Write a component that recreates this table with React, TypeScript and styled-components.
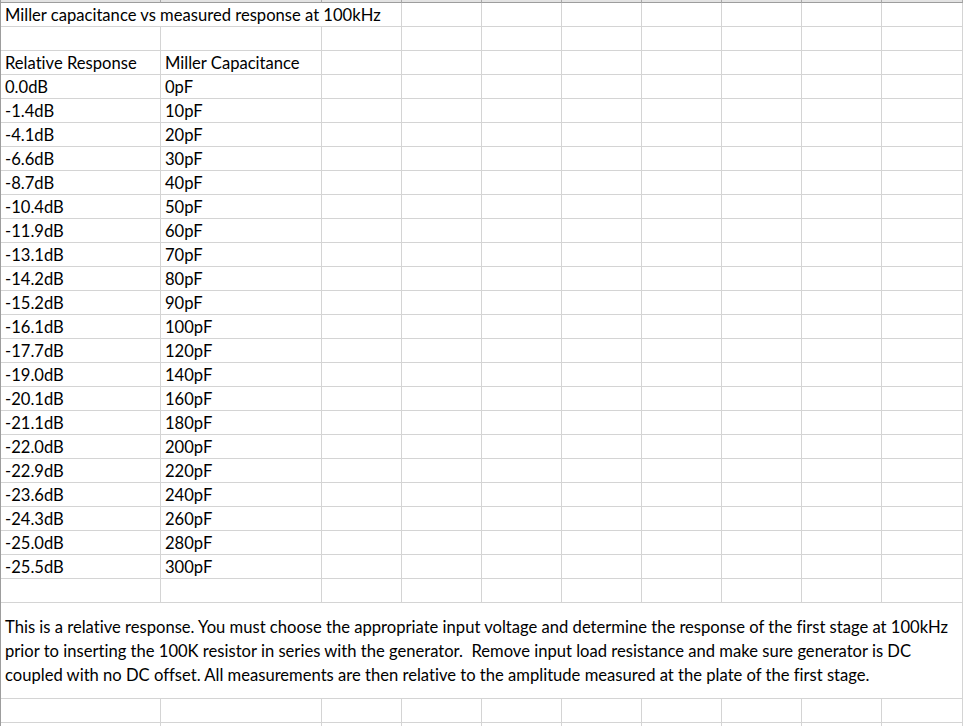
import React from 'react';
import styled, { createGlobalStyle } from 'styled-components';

const GlobalStyle = createGlobalStyle`
  html, body { margin: 0; padding: 0; background: #ffffff; }
  body {
    font-family: Lato, "Liberation Sans", sans-serif;
    color: #000;
    overflow: hidden;
    font-variant-ligatures: none;
  }
`;

const COLUMN_WIDTHS = [160, 161, 80, 80, 80, 80, 80, 80, 80, 81];
const GRID = '#d4d4d4';
const FONT_SIZE = '16.6px';

const Sheet = styled.div`
  display: grid;
  grid-template-columns: ${COLUMN_WIDTHS.map((w) => `${w}px`).join(' ')};
  width: 963px;
  box-sizing: border-box;
  border-left: 1px solid #9d9d9d;
`;

const HeaderCell = styled.div`
  height: 3px;
  box-sizing: border-box;
  background: #e3e3e3;
  border-right: 1px solid #a9a9a9;
  border-bottom: 1px solid #9d9d9d;
`;

const Cell = styled.div<{ $span?: number }>`
  grid-column: ${(p) => (p.$span ? `span ${p.$span}` : 'auto')};
  height: 24px;
  box-sizing: border-box;
  border-right: 1px solid ${GRID};
  border-bottom: 1px solid ${GRID};
  padding: 0 4px 2px 4px;
  display: flex;
  align-items: flex-end;
  font-size: ${FONT_SIZE};
  line-height: 18px;
  white-space: nowrap;
  overflow: visible;
`;

const NoteCell = styled.div`
  grid-column: 1 / -1;
  height: 96px;
  box-sizing: border-box;
  border-right: 1px solid ${GRID};
  border-bottom: 1px solid ${GRID};
  padding: 0 4px;
  display: flex;
  flex-direction: column;
  justify-content: center;
  font-size: ${FONT_SIZE};
  line-height: 24px;
`;

const NoteLine = styled.span`
  white-space: pre;
`;

const data: [string, string][] = [
  ['0.0dB', '0pF'],
  ['-1.4dB', '10pF'],
  ['-4.1dB', '20pF'],
  ['-6.6dB', '30pF'],
  ['-8.7dB', '40pF'],
  ['-10.4dB', '50pF'],
  ['-11.9dB', '60pF'],
  ['-13.1dB', '70pF'],
  ['-14.2dB', '80pF'],
  ['-15.2dB', '90pF'],
  ['-16.1dB', '100pF'],
  ['-17.7dB', '120pF'],
  ['-19.0dB', '140pF'],
  ['-20.1dB', '160pF'],
  ['-21.1dB', '180pF'],
  ['-22.0dB', '200pF'],
  ['-22.9dB', '220pF'],
  ['-23.6dB', '240pF'],
  ['-24.3dB', '260pF'],
  ['-25.0dB', '280pF'],
  ['-25.5dB', '300pF'],
];

const Blanks = ({ n }: { n: number }) => (
  <>
    {Array.from({ length: n }, (_, i) => (
      <Cell key={i} />
    ))}
  </>
);

export default function App() {
  return (
    <>
      <GlobalStyle />
      <Sheet>
        {COLUMN_WIDTHS.map((_, i) => (
          <HeaderCell key={i} />
        ))}

        <Cell $span={3}>Miller capacitance vs measured response at 100kHz</Cell>
        <Blanks n={7} />

        <Blanks n={10} />

        <Cell>Relative Response</Cell>
        <Cell>Miller Capacitance</Cell>
        <Blanks n={8} />

        {data.map(([db, pf]) => (
          <React.Fragment key={db}>
            <Cell>{db}</Cell>
            <Cell>{pf}</Cell>
            <Blanks n={8} />
          </React.Fragment>
        ))}

        <Blanks n={10} />

        <NoteCell>
          <NoteLine>
            This is a relative response. You must choose the appropriate input voltage and determine the response of the first stage at 100kHz
          </NoteLine>
          <NoteLine>
            {'prior to inserting the 100K resistor in series with the generator.  Remove input load resistance and make sure generator is DC'}
          </NoteLine>
          <NoteLine>
            coupled with no DC offset. All measurements are then relative to the amplitude measured at the plate of the first stage.
          </NoteLine>
        </NoteCell>

        <Blanks n={10} />
        <Blanks n={10} />
      </Sheet>
    </>
  );
}
